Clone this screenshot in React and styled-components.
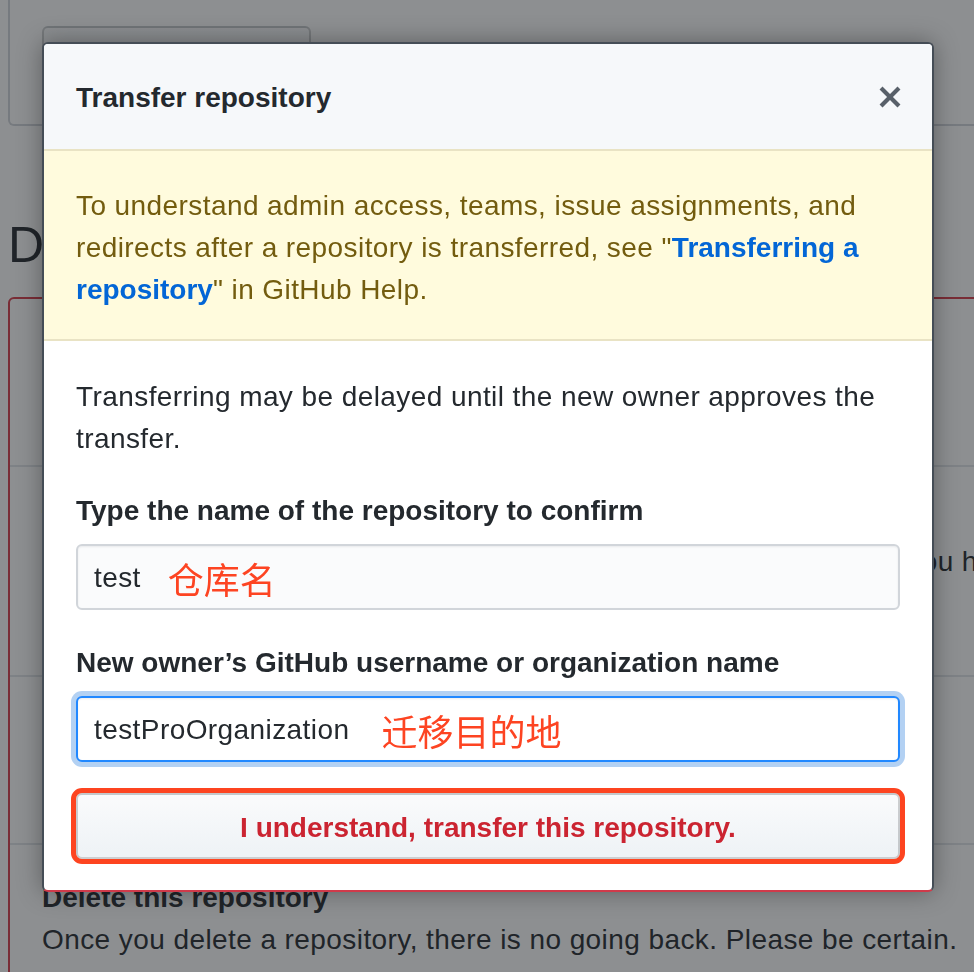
import React from 'react';
import styled, { createGlobalStyle } from 'styled-components';

const GlobalStyle = createGlobalStyle`
  html, body {
    margin: 0;
    padding: 0;
    overflow: hidden;
    background: #ffffff;
  }
  body {
    font-family: 'Liberation Sans', Arial, sans-serif;
    color: #24292e;
  }
`;

const Page = styled.div`
  width: 1400px;
  padding-left: 8px;
`;

const TopBox = styled.div`
  box-sizing: border-box;
  height: 126px;
  border: 2px solid #d1d5da;
  border-top: 0;
  border-radius: 0 0 6px 6px;
  padding: 26px 0 0 32px;
`;

const GhostButton = styled.div`
  box-sizing: border-box;
  width: 269px;
  height: 70px;
  border: 2px solid rgba(27, 31, 35, 0.2);
  border-radius: 6px;
  background: linear-gradient(-180deg, #fafbfc 0%, #eff3f6 90%);
`;

const Subhead = styled.h2`
  margin: 89px 0 22px;
  font-size: 50px;
  line-height: 60px;
  font-weight: 400;
`;

const DangerBox = styled.div`
  border: 2px solid #d73a49;
  border-radius: 6px;
`;

const DangerRow = styled.div`
  box-sizing: border-box;
  min-height: ${({ h }) => h}px;
  padding: 32px 32px;
  font-size: 28px;
  line-height: 42px;
  letter-spacing: 0.42px;
  & + & {
    border-top: 2px solid #e1e4e8;
  }
`;

const RowTitle = styled.div`
  font-weight: 700;
  letter-spacing: 0;
`;

const Backdrop = styled.div`
  position: fixed;
  inset: 0;
  background: rgba(27, 31, 35, 0.5);
`;

const Modal = styled.div`
  position: absolute;
  left: 42px;
  top: 42px;
  width: 892px;
  box-sizing: border-box;
  background: #fff;
  border: 2px solid #454d56;
  border-bottom-color: #cf3a4a;
  border-radius: 6px;
  box-shadow: 0 0 24px rgba(0, 0, 0, 0.35);
  overflow: hidden;
`;

const ModalHeader = styled.div`
  height: 105px;
  padding: 0 32px;
  display: flex;
  align-items: center;
  justify-content: space-between;
  background: #f6f8fa;
`;

const ModalTitle = styled.h3`
  margin: 0;
  padding-top: 2px;
  font-size: 28px;
  font-weight: 700;
  color: #24292e;
`;

const CloseButton = styled.button`
  border: 0;
  padding: 0;
  background: none;
  display: flex;
  margin-right: -2px;
  color: #586069;
`;

const Flash = styled.div`
  padding: 34px 32px 28px;
  background: #fffbdd;
  border-top: 2px solid #e9e3c4;
  border-bottom: 2px solid #e9e3c4;
  color: #735c0f;
  font-size: 28px;
  line-height: 42px;
  letter-spacing: 0.42px;

  & a {
    color: #0366d6;
    font-weight: 700;
    letter-spacing: 0;
    text-decoration: none;
  }
`;

const ModalBody = styled.div`
  padding: 35px 32px 31px;
  font-size: 28px;
  line-height: 42px;
`;

const Para = styled.p`
  margin: 0 0 30px;
  letter-spacing: 0.42px;
`;

const Label = styled.label`
  display: block;
  font-weight: 700;
  margin-bottom: 12px;
`;

const Field = styled.div`
  box-sizing: border-box;
  height: 66px;
  display: flex;
  align-items: center;
  padding: 1px 16px 0;
  margin-bottom: ${({ last }) => (last ? 31 : 32)}px;
  letter-spacing: 0.42px;
  border: 2px solid ${({ focused }) => (focused ? '#2188ff' : '#d1d5da')};
  border-radius: 6px;
  background: ${({ focused }) => (focused ? '#fff' : '#fafbfc')};
  box-shadow: ${({ focused }) =>
    focused
      ? 'inset 0 1px 2px rgba(27,31,35,0.075), 0 0 0 5px rgba(3,102,214,0.3)'
      : 'inset 0 1px 2px rgba(27,31,35,0.075)'};
`;

const Note = styled.span`
  margin-left: ${({ gap }) => gap}px;
  color: #fd4422;
  font-family: 'Noto Sans CJK SC', sans-serif;
  font-size: 36px;
  line-height: 42px;
  letter-spacing: 0;
`;

const DangerButton = styled.button`
  display: block;
  width: 100%;
  height: 66px;
  padding-top: 5px;
  border: 2px solid rgba(27, 31, 35, 0.2);
  border-radius: 6px;
  background: linear-gradient(-180deg, #fafbfc 0%, #eff3f6 90%);
  color: #cb2431;
  font-family: inherit;
  font-size: 28px;
  font-weight: 700;
  outline: 5px solid #fd4420;
  outline-offset: 0;
`;

const CloseIcon = () => (
  <svg width="24" height="32" viewBox="0 0 12 16" fill="currentColor">
    <path d="M7.48 8l3.75 3.75-1.48 1.48L6 9.48l-3.75 3.75-1.48-1.48L4.52 8 .77 4.25l1.48-1.48L6 6.52l3.75-3.75 1.48 1.48L7.48 8z" />
  </svg>
);

const App = () => (
  <>
    <GlobalStyle />
    <Page>
      <TopBox>
        <GhostButton />
      </TopBox>
      <Subhead>Danger Zone</Subhead>
      <DangerBox>
        <DangerRow h={166}>
          <RowTitle>Change repository visibility</RowTitle>
          <div>This repository is currently public.</div>
        </DangerRow>
        <DangerRow h={210}>
          <RowTitle>Transfer ownership</RowTitle>
          <div>Transfer this repository to another user or to an organization where you have the ability to create repositories.</div>
        </DangerRow>
        <DangerRow h={168}>
          <RowTitle>Archive this repository</RowTitle>
          <div>Mark this repository as archived and read-only.</div>
        </DangerRow>
        <DangerRow h={168}>
          <RowTitle>Delete this repository</RowTitle>
          <div>Once you delete a repository, there is no going back. Please be certain.</div>
        </DangerRow>
      </DangerBox>
    </Page>
    <Backdrop />
    <Modal>
      <ModalHeader>
        <ModalTitle>Transfer repository</ModalTitle>
        <CloseButton aria-label="Close">
          <CloseIcon />
        </CloseButton>
      </ModalHeader>
      <Flash>
        To understand admin access, teams, issue assignments, and redirects after a repository is
        transferred, see "<a href="#">Transferring a repository</a>" in GitHub Help.
      </Flash>
      <ModalBody>
        <Para>Transferring may be delayed until the new owner approves the transfer.</Para>
        <Label>Type the name of the repository to confirm</Label>
        <Field>
          test
          <Note gap={27}>仓库名</Note>
        </Field>
        <Label>New owner’s GitHub username or organization name</Label>
        <Field focused last>
          testProOrganization
          <Note gap={32}>迁移目的地</Note>
        </Field>
        <DangerButton>I understand, transfer this repository.</DangerButton>
      </ModalBody>
    </Modal>
  </>
);

export default App;
